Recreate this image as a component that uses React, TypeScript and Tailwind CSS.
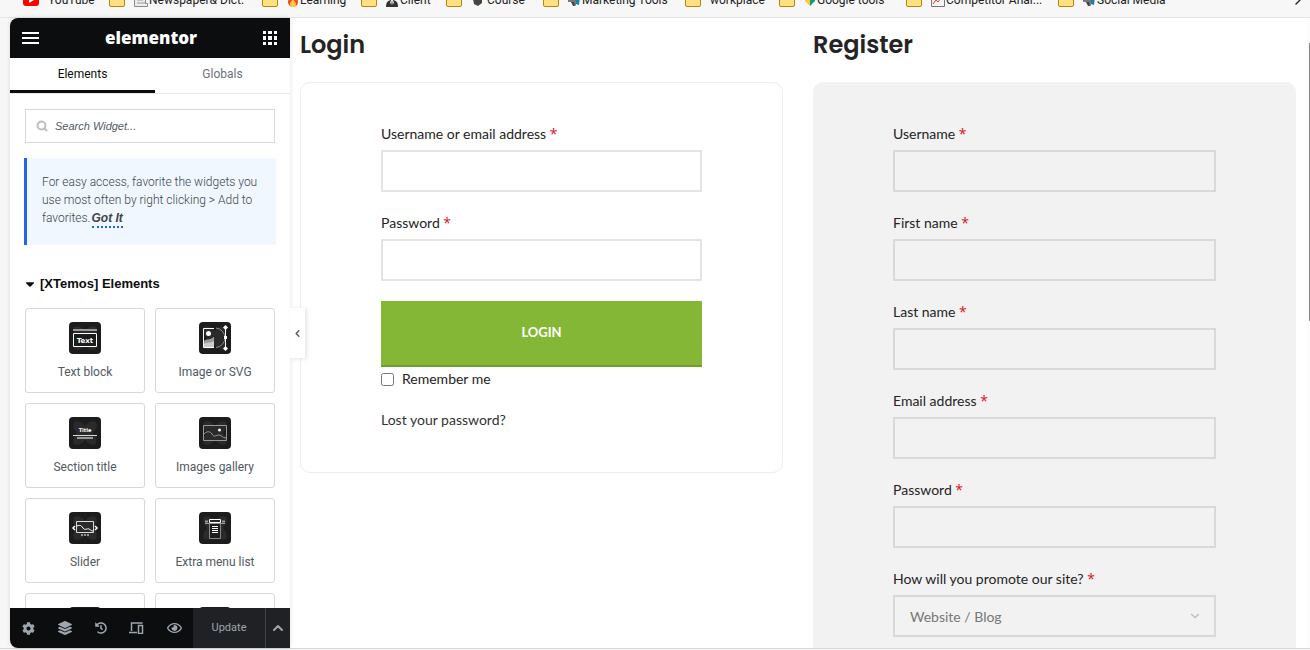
import { useState } from 'react';
import type { ReactNode } from 'react';
import { ChevronDown, ChevronLeft, ChevronRight, ChevronUp, Search } from 'lucide-react';
import { FaCaretDown, FaCog, FaHistory, FaLayerGroup, FaRegEye } from 'react-icons/fa';

type Bookmark = {
  label: string;
  width: string;
  glyph?: ReactNode;
};

const SpeakerGlyph = () => (
  <svg viewBox="0 0 13 14" className="h-[14px] w-[13px]">
    <path d="M0 5h3l5-4v12L3 9H0z" fill="#777" />
    <path d="M3 9l2 4h2L6 9z" fill="#444" />
    <path d="M8 3l4 1-1 8-3-1z" fill="#1b7fa8" />
  </svg>
);

const bookmarks: Bookmark[] = [
  {
    label: 'Newspaper& Dict.',
    width: 'w-[153px]',
    glyph: (
      <svg viewBox="0 0 14 14" className="h-[14px] w-[14px]">
        <path d="M.5.5h11v10h2v3H.5z" fill="#ededed" stroke="#8a8a8a" />
        <path d="M3 4h6M3 7h6M3 10h8" stroke="#999" />
      </svg>
    ),
  },
  {
    label: 'Learning',
    width: 'w-[99px]',
    glyph: (
      <svg viewBox="0 0 12 14" className="h-[14px] w-3">
        <path d="M6 0c1 4 5 4 5 9a5 5 0 0 1-10 0c0-3 2-3 2-6 1 1 2 2 2 3 1-2 1-4 1-6z" fill="#ef4b23" />
        <path d="M6 6c1 2 3 3 3 5a3 3 0 0 1-6 0c0-2 2-3 3-5z" fill="#ffc83d" />
      </svg>
    ),
  },
  {
    label: 'Client',
    width: 'w-[85px]',
    glyph: (
      <svg viewBox="0 0 13 14" className="h-[14px] w-[13px]">
        <circle cx="6" cy="4" r="3" fill="#f0b429" />
        <path d="M0 14c0-5 2-7 6-7s6 2 6 7z" fill="#333" />
        <path d="M5 7h2l1 3-2 2-2-2z" fill="#ddd" />
        <path d="M6 8l1 4H5z" fill="#555" />
      </svg>
    ),
  },
  {
    label: 'Course',
    width: 'w-[97px]',
    glyph: (
      <svg viewBox="0 0 15 14" className="h-[14px] w-[15px]">
        <path d="M1 5l6-3 6 3-6 3z" fill="#333" />
        <path d="M2 6h9v4l-4 3-4-2z" fill="#444" />
      </svg>
    ),
  },
  { label: 'Marketing Tools', width: 'w-[142px]', glyph: <SpeakerGlyph /> },
  { label: 'workplace', width: 'w-[94px]' },
  {
    label: 'Google tools',
    width: 'w-[127px]',
    glyph: (
      <svg viewBox="0 0 12 14" className="h-[14px] w-3">
        <path d="M1 1l5 4v8L1 8z" fill="#ffc83d" />
        <path d="M11 1L6 5v8l5-5z" fill="#0f9d77" />
      </svg>
    ),
  },
  {
    label: 'Competitor Anal...',
    width: 'w-[152px]',
    glyph: (
      <svg viewBox="0 0 14 14" className="h-[14px] w-[14px]">
        <path d="M.5.5h13v13H.5z" fill="#f5f5f5" stroke="#777" />
        <path d="M2 11l3-4 2 2 5-7" fill="none" stroke="#e8412f" />
      </svg>
    ),
  },
  { label: 'Social Media', width: 'w-[120px]', glyph: <SpeakerGlyph /> },
];

function BookmarksBar() {
  return (
    <header className="flex h-[18px] shrink-0 flex-col justify-end overflow-hidden border-b border-[#e5e5e5] bg-[#f7f7f7] pb-[9px]">
      <nav className="flex h-4 shrink-0 items-center whitespace-nowrap pr-1 pl-[23px] font-[Roboto,sans-serif] text-[12px] leading-4 text-[#222]">
        <a href="#youtube" className="flex w-[86px] shrink-0 items-center gap-[9px]">
          <svg viewBox="0 0 16 12" className="h-3 w-4">
            <rect width="16" height="12" rx="3" fill="#f00" />
            <path d="M6 3l5 3-5 3z" fill="#fff" />
          </svg>
          YouTube
        </a>
        {bookmarks.map((b) => (
          <a key={b.label} href={`#${b.label}`} className={`flex shrink-0 items-center gap-px ${b.width}`}>
            <span className="mr-2 h-[14px] w-4 rounded-[2px] border border-[#b8860b] bg-[#ffe083]" />
            {b.glyph}
            {b.label}
          </a>
        ))}
        <button aria-label="More bookmarks" className="ml-auto">
          <ChevronRight className="h-4 w-4" />
        </button>
      </nav>
    </header>
  );
}

// Shared dark tile behind every widget drawing
function WidgetTile({ children }: { children?: ReactNode }) {
  return (
    <svg viewBox="0 0 32 32" className="h-8 w-8" fill="none">
      <rect width="32" height="32" rx="4" fill="#1c1c1c" />
      <path
        d="M5 5c4-2 8 0 11 4 3-4 7-6 11-4 2 4 0 8-3 11 3 3 5 7 3 11-4 2-8 0-11-4-3 4-7 6-11 4-2-4 0-8 3-11-3-3-5-7-3-11z"
        fill="#2a2a2a"
      />
      {children}
    </svg>
  );
}

const widgets = [
  {
    name: 'Text block',
    art: (
      <>
        <path d="M4 8h24" stroke="#999" strokeWidth="2" />
        <path d="M4.500 11.500h23v13h-23z" fill="#1c1c1c" stroke="#fff" />
        <text x="16" y="21" textAnchor="middle" fontSize="7" fontWeight="900" fill="#fff" fontFamily="DejaVu Sans">
          Text
        </text>
      </>
    ),
  },
  {
    name: 'Image or SVG',
    art: (
      <>
        <path d="M15 6.500H4.500v19H15" stroke="#fff" />
        <path d="M5 20c3-4 4 0 10-5v10H5z" fill="#ccc" />
        <path d="M5 19c3-3 5 0 10-4v4c-4 3-6 0-10 3z" fill="#999" />
        <circle cx="9.500" cy="11.500" r="2.500" fill="#fff" />
        <path d="M17 6a10 10 0 0 1 9 9.500 10 10 0 0 1-9 10" stroke="#888" />
        <path d="M26.500 5v22" stroke="#fff" />
        <path d="M26.500 3l2.500 2.500-2.500 2.500L24 5.500zM26.500 24l2.500 2.500-2.500 2.500-2.500-2.500zM25 14h3v3h-3z" fill="#fff" />
      </>
    ),
  },
  {
    name: 'Section title',
    art: (
      <>
        <text x="16" y="15" textAnchor="middle" fontSize="5" fontWeight="900" fill="#fff" fontFamily="DejaVu Sans">
          Title
        </text>
        <path d="M4 18.500h24" stroke="#ddd" />
        <path d="M8 21h16" stroke="#999" strokeWidth="2" />
      </>
    ),
  },
  {
    name: 'Images gallery',
    art: (
      <>
        <path d="M4.500 8.500h23v15h-23z" stroke="#999" />
        <path d="M5 17c3-3 6-3 8 0 2 4 4 1 7 1s3 3 7 3" stroke="#999" />
        <circle cx="20.500" cy="13" r="1.500" fill="#fff" />
      </>
    ),
  },
  {
    name: 'Slider',
    art: (
      <>
        <path d="M7.500 9.500h17v11h-17z" stroke="#ddd" />
        <path d="M8 14c3-1 4-1 6 2s4 0 6 1 2 2 4 2" stroke="#fff" />
        <path d="M6 14l-2 2 2 2M26 14l2 2-2 2" stroke="#fff" strokeWidth="1.500" />
        <path d="M12 23h2M15 23h2M18 23h2" stroke="#fff" />
      </>
    ),
  },
  {
    name: 'Extra menu list',
    art: (
      <>
        <path d="M10.500 11v15.500h11V11" fill="#1c1c1c" stroke="#888" />
        <path d="M10.500 7.500h11v3h-11z" stroke="#fff" />
        <path d="M6 9.500h3M23 9.500h3" stroke="#999" strokeWidth="2" />
        <path d="M6 11.500h20" stroke="#999" />
        <path d="M13 14.500h6M13 16.500h6M13 18.500h6M13 20.500h6" stroke="#fff" />
      </>
    ),
  },
  { name: 'Button', art: null },
  { name: 'Products', art: null },
];

function EditorPanel() {
  const [query, setQuery] = useState('');

  return (
    <aside className="relative z-10 w-[280px] shrink-0 rounded-l-lg font-[Roboto,sans-serif] shadow-[0_0_5px_rgba(0,0,0,0.12)]">
      <div className="flex h-full flex-col overflow-hidden rounded-l-lg bg-white">
        {/* Panel header */}
        <div className="flex h-10 shrink-0 items-center justify-between bg-[#0c0d0e] pr-[13px] pl-3 text-white">
          <button aria-label="Menu">
            <svg viewBox="0 0 17 12" className="h-3 w-[17px]">
              <path d="M0 1h17M0 6h17M0 11h17" stroke="currentColor" strokeWidth="2" />
            </svg>
          </button>
          <span className="font-['Open_Sans',sans-serif] text-[17px] leading-6 font-extrabold">elementor</span>
          <button aria-label="Widgets">
            <svg viewBox="0 0 14 14" className="h-[14px] w-[14px]" fill="currentColor">
              <path d="M0 0h3v3H0zM5 0h4v3H5zM11 0h3v3h-3zM0 5h3v4H0zM5 5h4v4H5zM11 5h3v4h-3zM0 11h3v3H0zM5 11h4v3H5zM11 11h3v3h-3z" />
            </svg>
          </button>
        </div>

        {/* Tabs */}
        <div className="flex h-9 shrink-0 border-b border-[#e6e8ea] text-[12px]">
          <button className="w-[145px] border-b-[3px] border-[#0c0d0e] text-[#0c0d0e]">Elements</button>
          <button className="flex-1 border-b-[3px] border-transparent text-[#69727d]">Globals</button>
        </div>

        <div className="min-h-0 flex-1 overflow-hidden px-[15px] pt-[15px]">
          <label className="flex h-[34px] items-center gap-[7px] border border-[#d5d8dc] pl-[10px]">
            <Search className="h-3 w-3 text-[#babfc5]" strokeWidth={4} />
            <input
              type="search"
              aria-label="Search Widget"
              value={query}
              onChange={(e) => setQuery(e.target.value)}
              placeholder="Search Widget..."
              className="min-w-0 flex-1 font-['Liberation_Sans',sans-serif] text-[11px] italic outline-none placeholder:text-[#515962]"
            />
          </label>

          <div className="-mx-px mt-[15px] rounded-r-[3px] border-l-[3px] border-[#2563eb] bg-[#f0f7ff] p-[15px] pb-[17px] text-[12px] leading-[18px] font-light text-[#3f444b]">
            For easy access, favorite the widgets you use most often by right clicking &gt; Add to favorites.
            <button className="ml-px border-b-2 border-dotted border-[#2563eb] font-['Liberation_Sans',sans-serif] leading-4 font-bold italic">
              Got It
            </button>
          </div>

          <button className="mt-[29px] flex h-5 items-center gap-[5px] font-['Liberation_Sans',sans-serif] text-[13px] leading-5 font-bold text-[#0c0d0e]">
            <FaCaretDown className="h-[14px] w-[10px]" />
            [XTemos] Elements
          </button>

          <div className="mt-[14px] grid grid-cols-2 gap-[10px]">
            {widgets.map((w) => (
              <button
                key={w.name}
                className="flex h-[85px] flex-col items-center gap-[10px] rounded-[3px] border border-[#d5d8dc] pt-[13px] text-[12px] leading-4 text-[#515962]"
              >
                <WidgetTile>{w.art}</WidgetTile>
                {w.name}
              </button>
            ))}
          </div>
        </div>

        {/* Footer tools */}
        <div className="flex h-10 shrink-0 bg-[#0c0d0e] text-[#9da5ae]">
          <div className="flex flex-1 items-center justify-between pr-[11px] pl-3">
            <button aria-label="Settings"><FaCog className="h-[13px] w-[13px]" /></button>
            <button aria-label="Structure"><FaLayerGroup className="h-[14px] w-[14px]" /></button>
            <button aria-label="History"><FaHistory className="h-3 w-3" /></button>
            <button aria-label="Responsive mode">
              <svg viewBox="0 0 15 12" className="h-3 w-[15px]" fill="none" stroke="currentColor">
                <path d="M13 1.500V1H2.500v8M0 10.500h8" strokeWidth="1.500" />
                <path d="M9.500 3.500h4v8h-4z" strokeWidth="1.500" />
              </svg>
            </button>
            <button aria-label="Preview"><FaRegEye className="h-[14px] w-[15px]" /></button>
          </div>
          <button className="w-[72px] bg-[#1f2124] text-[11px]">Update</button>
          <button aria-label="Save options" className="flex w-[25px] items-center justify-center border-l border-[#3f444b] bg-[#1f2124]">
            <ChevronUp className="h-4 w-4" strokeWidth={3} />
          </button>
        </div>
      </div>

      {/* Collapse handle over the preview edge */}
      <button
        aria-label="Hide panel"
        className="absolute top-[290px] left-full flex h-[50px] w-[15px] items-center justify-center bg-white text-[#515962] shadow-[2px_1px_4px_rgba(0,0,0,0.1)]"
      >
        <ChevronLeft className="h-[11px] w-[11px]" strokeWidth={3} />
      </button>
    </aside>
  );
}

type FieldProps = {
  id: string;
  label: string;
  type?: string;
  border: string;
};

function FieldLabel({ id, label }: { id: string; label: string }) {
  return (
    <label htmlFor={id} className="mb-[5px] block leading-[22px] text-[#242424]">
      {label} <span className="font-['Open_Sans',sans-serif] leading-4 text-[#e01020]">*</span>
    </label>
  );
}

function Field({ id, label, type = 'text', border }: FieldProps) {
  return (
    <div className="mb-5">
      <FieldLabel id={id} label={label} />
      <input id={id} type={type} className={`block h-[42px] w-full border-2 bg-transparent px-[15px] outline-none ${border}`} />
    </div>
  );
}

const registerFields = [
  { id: 'reg-username', label: 'Username' },
  { id: 'reg-first', label: 'First name' },
  { id: 'reg-last', label: 'Last name' },
  { id: 'reg-email', label: 'Email address', type: 'email' },
  { id: 'reg-password', label: 'Password', type: 'password' },
];

function Preview() {
  return (
    <main className="grid min-w-0 flex-1 grid-cols-2 gap-[30px] overflow-hidden bg-white px-[10px] pt-[9px] font-[Lato,sans-serif] text-[14px]">
      <section>
        <h2 className="mb-[19px] font-[Poppins,Inter,sans-serif] text-[24px] leading-9 font-semibold text-[#242424]">Login</h2>
        <form className="rounded-[10px] border border-[#ededed] px-20 pt-10 pb-[41px]">
          <Field id="login-user" label="Username or email address" border="border-[#e4e4e4]" />
          <Field id="login-pass" label="Password" type="password" border="border-[#e4e4e4]" />
          <button type="button" className="block h-[66px] w-full border-b-2 border-[#6f9f2c] bg-[#85b737] text-[13px] font-bold text-white">
            LOGIN
          </button>
          <label className="flex items-center gap-2 leading-6 text-[#242424]">
            <input type="checkbox" className="h-[13px] w-[13px]" />
            Remember me
          </label>
          <a href="#lost-password" className="mt-[18px] block leading-[22px] text-[#333]">
            Lost your password?
          </a>
        </form>
      </section>

      <section>
        <h2 className="mb-[19px] font-[Poppins,Inter,sans-serif] text-[24px] leading-9 font-semibold text-[#242424]">Register</h2>
        <form className="rounded-[10px] border border-[#f2f2f2] bg-[#f2f2f2] px-[79px] pt-10 pb-20">
          {registerFields.map((f) => (
            <Field key={f.id} {...f} border="border-[#d9d9d9]" />
          ))}
          <FieldLabel id="reg-promote" label="How will you promote our site?" />
          <div className="relative">
            <select id="reg-promote" className="h-[42px] w-full appearance-none border-2 border-[#d9d9d9] bg-transparent px-[15px] text-[#777]">
              <option>Website / Blog</option>
            </select>
            <ChevronDown className="pointer-events-none absolute top-[14px] right-[14px] h-[14px] w-[14px] text-[#bbb]" />
          </div>
        </form>
      </section>
    </main>
  );
}

export default function App() {
  return (
    <div className="flex h-screen flex-col overflow-hidden bg-[#f7f7f7]">
      <BookmarksBar />
      <div className="flex min-h-0 flex-1 pl-[10px]">
        <EditorPanel />
        <Preview />
        {/* Page scrollbar */}
        <div className="flex w-1 shrink-0 flex-col items-end bg-[#fcfcfc] pt-[25px]">
          <div className="h-[278px] w-px bg-[#888]" />
        </div>
      </div>
      <footer className="h-[2px] shrink-0 border-t border-[#d9d9d9]" />
    </div>
  );
}
